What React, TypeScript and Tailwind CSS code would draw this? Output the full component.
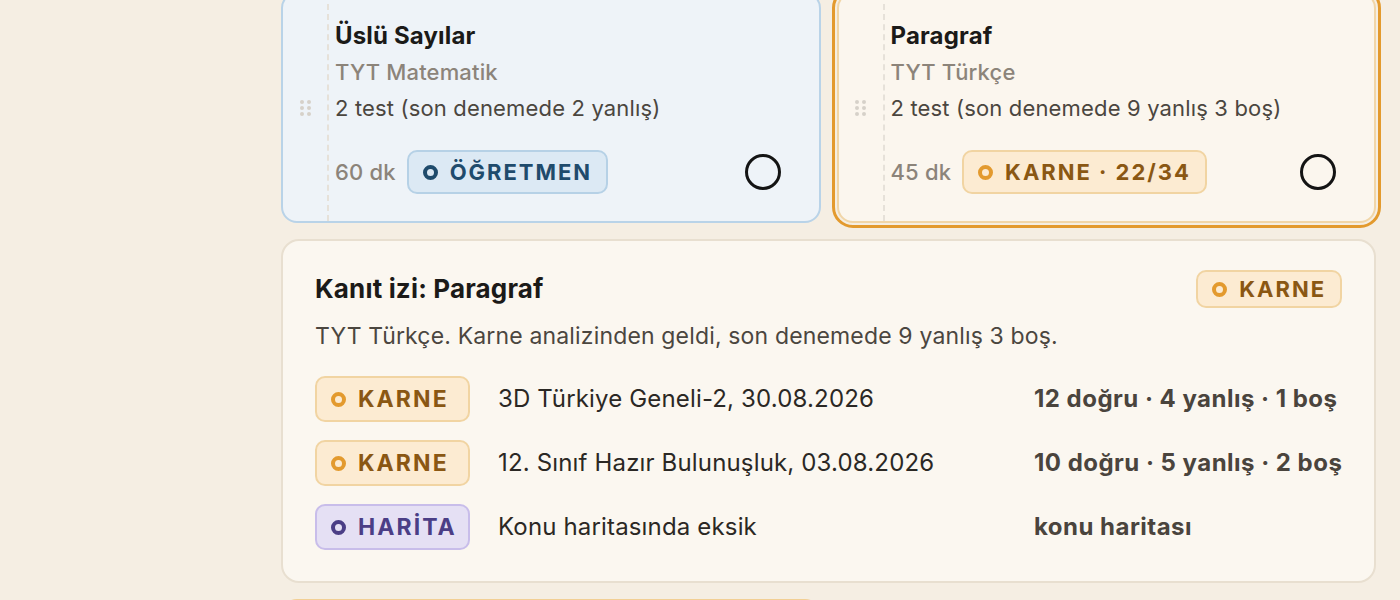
import React from "react";

type Tone = "karne" | "ogretmen" | "harita";

const tones: Record<Tone, { box: string; dot: string }> = {
  karne: { box: "bg-[#fcebd2] border-[#f1d4a2] text-[#8a5713]", dot: "border-[#e39a2e]" },
  ogretmen: { box: "bg-[#dce9f4] border-[#b6d1e6] text-[#1f4b6c]", dot: "border-[#1f4b6c]" },
  harita: { box: "bg-[#e5e0f4] border-[#c8bdea] text-[#4b3e86]", dot: "border-[#4b3e86]" },
};

function Badge({ tone, label, className = "" }: { tone: Tone; label: string; className?: string }) {
  const t = tones[tone];
  return (
    <span className={`inline-flex items-center gap-[12px] rounded-[10px] border-2 font-bold tracking-[0.09em] ${t.box} ${className}`}>
      <span className={`h-[15px] w-[15px] shrink-0 rounded-full border-4 ${t.dot}`} />
      {label}
    </span>
  );
}

function Handle() {
  return (
    <div className="grid grid-cols-2 gap-x-[3px] gap-y-[2px]">
      {[0, 1, 2, 3, 4, 5].map((i) => (
        <span key={i} className="h-[4px] w-[4px] rounded-full bg-[#d6d1c9]" />
      ))}
    </div>
  );
}

type Task = { title: string; course: string; detail: string; minutes: number; tone: Tone; badge: string; selected?: boolean };

const tasks: Task[] = [
  { title: "Üslü Sayılar", course: "TYT Matematik", detail: "2 test (son denemede 2 yanlış)", minutes: 60, tone: "ogretmen", badge: "ÖĞRETMEN" },
  { title: "Paragraf", course: "TYT Türkçe", detail: "2 test (son denemede 9 yanlış 3 boş)", minutes: 45, tone: "karne", badge: "KARNE · 22/34", selected: true },
];

function TaskCard({ task }: { task: Task }) {
  const look = task.selected
    ? "bg-[#fbf6ee] border-[#f1d6a8] outline-[3px] outline-offset-[2px] outline-[#e39a2e]"
    : "bg-[#eef3f8] border-[#b9d3e8]";
  return (
    <div className={`flex rounded-[16px] border-2 ${look}`}>
      <div className="flex w-[46px] shrink-0 items-center justify-center border-r-2 border-dashed border-[#e6e1d9]">
        <Handle />
      </div>
      <div className="flex-1 pb-[27px] pl-[6px] pr-[38px] pt-[23px]">
        <div className="text-[24px] font-bold leading-[37px] text-[#1b1a18]">{task.title}</div>
        <div className="text-[22px] font-medium leading-[36px] text-[#8c847a]">{task.course}</div>
        <div className="text-[22px] leading-[36px] text-[#4b463f]">{task.detail}</div>
        <div className="mt-6 flex items-center">
          <span className="text-[22px] font-medium text-[#8c847a]">{task.minutes} dk</span>
          <Badge tone={task.tone} label={task.badge} className="ml-[11px] h-[44px] px-[14px] text-[22px]" />
          <span className="ml-auto h-[36px] w-[36px] rounded-full border-[3px] border-[#141414]" />
        </div>
      </div>
    </div>
  );
}

const evidence: { tone: Tone; label: string; source: string; result: string }[] = [
  { tone: "karne", label: "KARNE", source: "3D Türkiye Geneli-2, 30.08.2026", result: "12 doğru · 4 yanlış · 1 boş" },
  { tone: "karne", label: "KARNE", source: "12. Sınıf Hazır Bulunuşluk, 03.08.2026", result: "10 doğru · 5 yanlış · 2 boş" },
  { tone: "harita", label: "HARİTA", source: "Konu haritasında eksik", result: "konu haritası" },
];

export default function App() {
  return (
    <div className="flex h-[600px] overflow-hidden bg-[#f5eee3] font-['Inter','Noto_Sans',sans-serif] tracking-[0.01em]">
      <aside className="w-[257px] shrink-0" />
      <main className="-mt-[8px] flex-1 pl-6 pr-6">
        <div className="grid grid-cols-2 gap-4">
          {tasks.map((t) => (
            <TaskCard key={t.title} task={t} />
          ))}
        </div>

        <section className="mt-4 rounded-[18px] border-2 border-[#e8dfd0] bg-[#fbf7f0] px-8 pb-[31px] pt-[28px]">
          <div className="flex h-[40px] items-center justify-between">
            <h2 className="text-[26px] font-bold leading-[40px] text-[#1b1a18]">Kanıt izi: Paragraf</h2>
            <Badge tone="karne" label="KARNE" className="h-[38px] px-[14px] text-[22px]" />
          </div>
          <p className="mt-[11px] text-[23px] leading-[32px] text-[#4b463f]">TYT Türkçe. Karne analizinden geldi, son denemede 9 yanlış 3 boş.</p>
          <div className="mt-[24px] grid grid-cols-[155px_1fr_308px] items-center gap-x-[28px] gap-y-[18px]">
            {evidence.map((e, i) => (
              <React.Fragment key={i}>
                <Badge tone={e.tone} label={e.label} className="h-[46px] px-[14px] text-[23px]" />
                <span className="text-[24px] text-[#2b2824]">{e.source}</span>
                <span className="whitespace-nowrap text-[24px] font-bold tracking-[0.02em] text-[#4a443d]">{e.result}</span>
              </React.Fragment>
            ))}
          </div>
        </section>

        <div className="mt-4 grid grid-cols-2 gap-4">
          <div className="h-[120px] rounded-[16px] border-2 border-[#f2cf94] bg-[#fdf4e2]" />
        </div>
      </main>
    </div>
  );
}
